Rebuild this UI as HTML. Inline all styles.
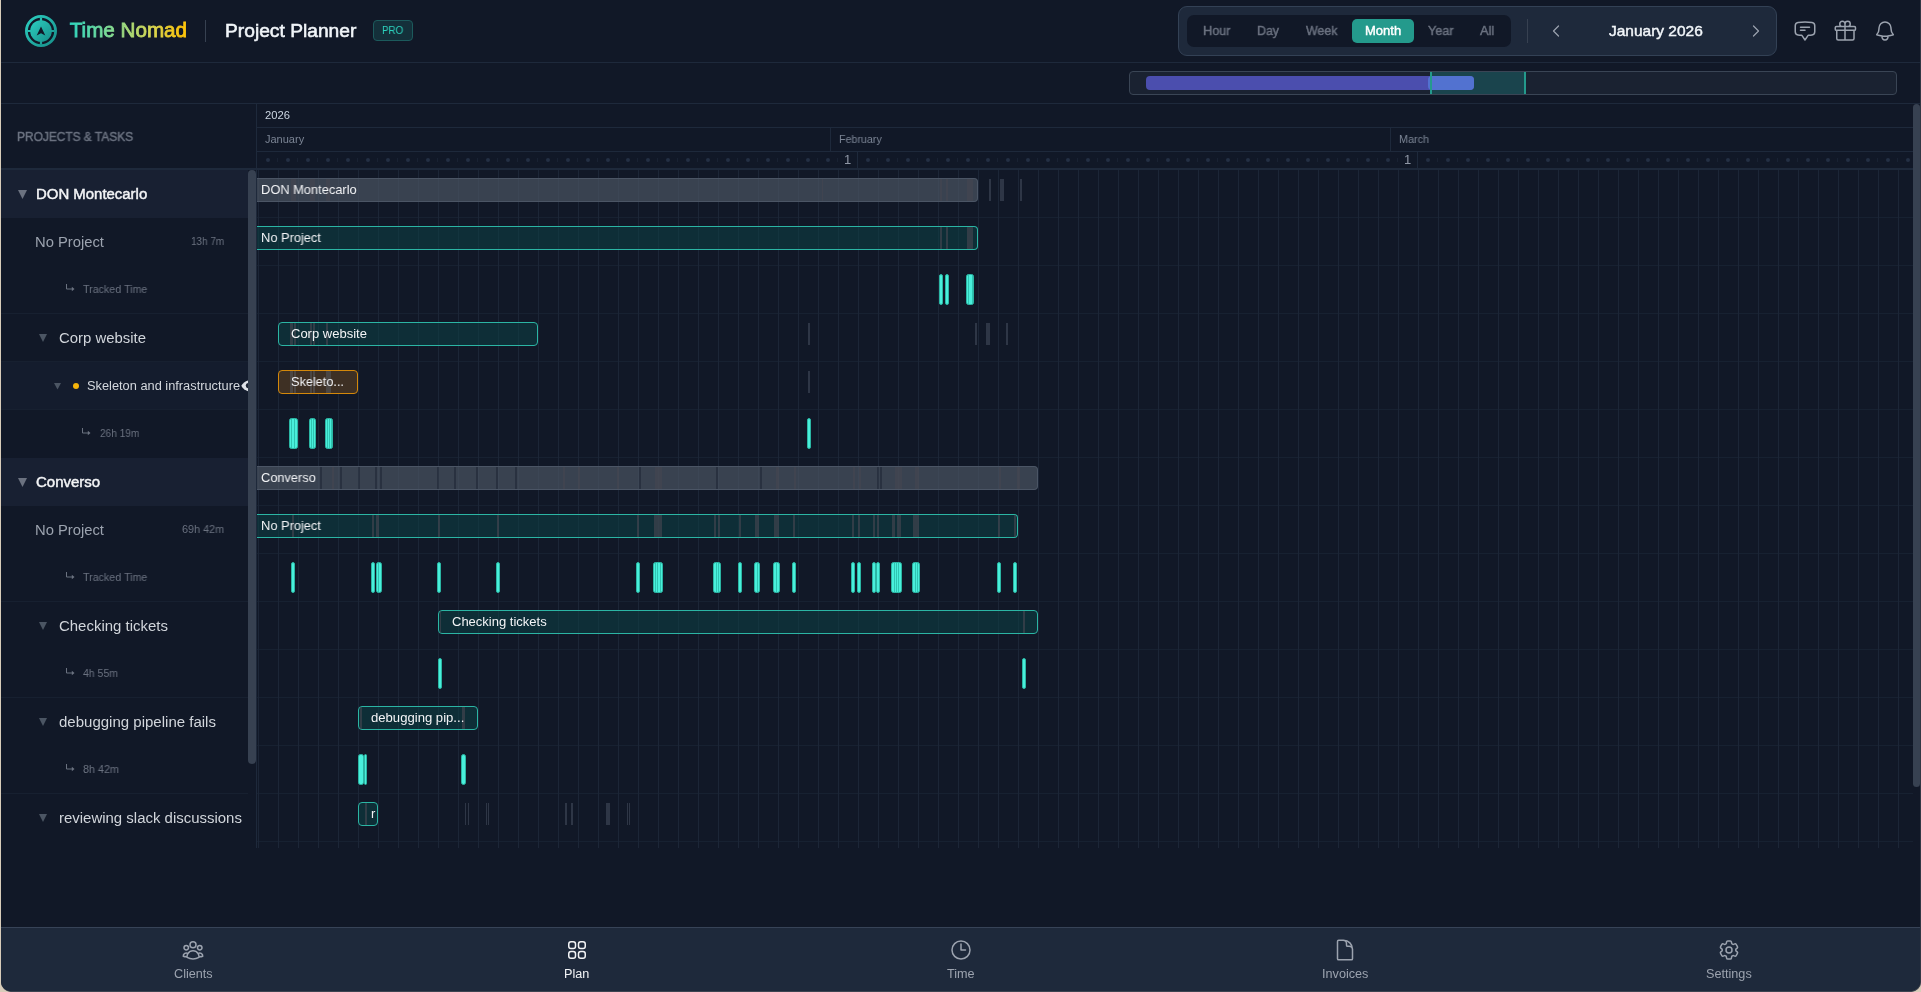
<!DOCTYPE html><html><head><meta charset="utf-8"><title>Time Nomad - Project Planner</title><style>
html,body{margin:0;padding:0}
body{width:1921px;height:992px;overflow:hidden;background:#d8ccba;font-family:"Liberation Sans",sans-serif;position:relative}
#win{position:absolute;left:1px;top:0;width:1919px;height:991px;background:#111827;border-radius:0 0 10px 10px;overflow:hidden;box-shadow:1px 0 0 0 #313845,0 1px 0 0 #3d4451,1px 1px 0 0 #3d4451}
#w{position:absolute;left:-1px;top:0;width:1921px;height:992px}
.t{position:absolute;white-space:nowrap;transform-origin:0 50%;display:block;will-change:transform}
.b{position:absolute;box-sizing:border-box}
svg{position:absolute;overflow:visible}
</style></head><body><div id="win"><div id="w">
<!-- header -->
<div class="b" style="left:0px;top:62px;width:1921px;height:1px;background:#1e293b"></div>
<div class="b" style="left:0px;top:103px;width:1921px;height:1px;background:#1e293b"></div>
<svg style="left:25px;top:15px" width="32" height="32" viewBox="0 0 32 32">
<defs><linearGradient id="lg" x1="0" y1="0" x2="1" y2="1"><stop offset="0" stop-color="#2ccfc0"/><stop offset="1" stop-color="#178f8a"/></linearGradient></defs>
<circle cx="16" cy="16" r="14.6" fill="none" stroke="url(#lg)" stroke-width="2.8"/>
<circle cx="16" cy="16" r="10.8" fill="url(#lg)"/>
<path d="M16 2.5v5.5M16 24v5.5M2.5 16h5.5M24 16h5.5" stroke="url(#lg)" stroke-width="2.2"/>
<path d="M16 11.4 20.3 20.4 16 18.3 11.7 20.4Z" fill="#111827"/>
</svg>
<svg style="left:66px;top:12px;will-change:transform" width="126" height="34" viewBox="66 12 126 34"><defs><linearGradient id="tg" gradientUnits="userSpaceOnUse" x1="69" y1="0" x2="187" y2="0"><stop offset="0" stop-color="#2dd4bf"/><stop offset="0.4" stop-color="#8ddb8c"/><stop offset="0.7" stop-color="#d6d552"/><stop offset="0.95" stop-color="#fcc40c"/></linearGradient></defs><text x="69.8" y="37" font-family="Liberation Sans, sans-serif" font-size="20" textLength="117.2" lengthAdjust="spacingAndGlyphs" fill="url(#tg)" stroke="url(#tg)" stroke-width="0.8">Time Nomad</text></svg>
<div class="b" style="left:205px;top:20px;width:1px;height:22px;background:#374151"></div>
<span class="t" style="left:225.00px;top:20px;font-size:18px;line-height:22px;-webkit-text-stroke:0.55px;color:#f1f5f9;transform:scaleX(1.0677);">Project Planner</span>
<div class="b" style="left:373px;top:20px;width:40px;height:21px;background:#14303a;border:1px solid #1c5a5c;border-radius:4px"></div>
<span class="t" style="left:381.70px;top:23px;font-size:11px;line-height:15px;color:#2dd4bf;transform:scaleX(0.8901);">PRO</span>
<div class="b" style="left:1178px;top:6px;width:599px;height:50px;background:#1e293b;border:1px solid #334155;border-radius:9px"></div>
<div class="b" style="left:1187px;top:15px;width:324px;height:32px;background:#111827;border-radius:7px"></div>
<div class="b" style="left:1352px;top:19px;width:62px;height:24px;background:#249a8c;border-radius:5px"></div>
<span class="t" style="left:1203.00px;top:22px;font-size:13px;line-height:17px;-webkit-text-stroke:0.45px;color:#6b7280;transform:scaleX(0.9782);">Hour</span>
<span class="t" style="left:1257.30px;top:22px;font-size:13px;line-height:17px;-webkit-text-stroke:0.45px;color:#6b7280;transform:scaleX(0.9524);">Day</span>
<span class="t" style="left:1306.30px;top:22px;font-size:13px;line-height:17px;-webkit-text-stroke:0.45px;color:#6b7280;transform:scaleX(0.9517);">Week</span>
<span class="t" style="left:1364.75px;top:22px;font-size:13px;line-height:17px;-webkit-text-stroke:0.45px;color:#ffffff;">Month</span>
<span class="t" style="left:1428.00px;top:22px;font-size:13px;line-height:17px;-webkit-text-stroke:0.45px;color:#6b7280;transform:scaleX(0.9720);">Year</span>
<span class="t" style="left:1480.00px;top:22px;font-size:13px;line-height:17px;-webkit-text-stroke:0.45px;color:#6b7280;transform:scaleX(0.9833);">All</span>
<div class="b" style="left:1527px;top:19px;width:1px;height:24px;background:#374151"></div>
<svg style="left:1548px;top:23px" width="16" height="16" viewBox="0 0 24 24" fill="none" stroke="#9ca3af" stroke-width="1.8" stroke-linecap="round" stroke-linejoin="round" ><path d="M15.75 19.5 8.25 12l7.5-7.5"/></svg>
<svg style="left:1748px;top:23px" width="16" height="16" viewBox="0 0 24 24" fill="none" stroke="#9ca3af" stroke-width="1.8" stroke-linecap="round" stroke-linejoin="round" ><path d="m8.25 4.5 7.5 7.5-7.5 7.5"/></svg>
<span class="t" style="left:1608.70px;top:21px;font-size:15px;line-height:19px;-webkit-text-stroke:0.45px;color:#f1f5f9;transform:scaleX(1.0320);">January 2026</span>
<svg style="left:1793px;top:19px" width="24" height="24" viewBox="0 0 24 24" fill="none" stroke="#9ca3af" stroke-width="1.5" stroke-linecap="round" stroke-linejoin="round" ><path d="M7.5 8.25h9m-9 3H12m-9.75 1.51c0 1.6 1.123 2.994 2.707 3.227 1.129.166 2.27.293 3.423.379.35.026.67.21.865.501L12 21l2.755-4.133a1.14 1.14 0 0 1 .865-.501 48.172 48.172 0 0 0 3.423-.379c1.584-.233 2.707-1.626 2.707-3.228V6.741c0-1.602-1.123-2.995-2.707-3.228A48.394 48.394 0 0 0 12 3c-2.392 0-4.744.175-7.043.513C3.373 3.746 2.25 5.14 2.25 6.741v6.018Z"/></svg>
<svg style="left:1833px;top:19px" width="24" height="24" viewBox="0 0 24 24" fill="none" stroke="#9ca3af" stroke-width="1.5" stroke-linecap="round" stroke-linejoin="round" ><path d="M21 11.25v8.25a1.5 1.5 0 0 1-1.5 1.5H5.25a1.5 1.5 0 0 1-1.5-1.5v-8.25M12 4.875A2.625 2.625 0 1 0 9.375 7.5H12m0-2.625V7.5m0-2.625A2.625 2.625 0 1 1 14.625 7.5H12m0 0V21m-8.625-9.75h18c.621 0 1.125-.504 1.125-1.125v-1.5c0-.621-.504-1.125-1.125-1.125h-18c-.621 0-1.125.504-1.125 1.125v1.5c0 .621.504 1.125 1.125 1.125Z"/></svg>
<svg style="left:1873px;top:19px" width="24" height="24" viewBox="0 0 24 24" fill="none" stroke="#9ca3af" stroke-width="1.5" stroke-linecap="round" stroke-linejoin="round" ><path d="M14.857 17.082a23.848 23.848 0 0 0 5.454-1.31A8.967 8.967 0 0 1 18 9.75V9A6 6 0 0 0 6 9v.75a8.967 8.967 0 0 1-2.312 6.022c1.733.64 3.56 1.085 5.455 1.31m5.714 0a24.255 24.255 0 0 1-5.714 0m5.714 0a3 3 0 1 1-5.714 0"/></svg>
<div class="b" style="left:1129px;top:71px;width:768px;height:24px;background:#1a2231;border:1px solid #3a4555;border-radius:4px"></div>
<div class="b" style="left:1430px;top:72px;width:96px;height:22px;background:#1a444d"></div>
<div class="b" style="left:1146px;top:76px;width:328px;height:14px;background:#4b4eae;border-radius:4px"></div>
<div class="b" style="left:1428px;top:76px;width:46px;height:14px;background:#5272d0;border-radius:4px"></div>
<div class="b" style="left:1430px;top:72px;width:2px;height:22px;background:#249a8c"></div>
<div class="b" style="left:1524px;top:72px;width:2px;height:22px;background:#249a8c"></div>
<!-- left panel -->
<span class="t" style="left:17.25px;top:129px;font-size:12px;line-height:16px;-webkit-text-stroke:0.45px;color:#6b7280;transform:scaleX(0.9925);">PROJECTS &amp; TASKS</span>
<div class="b" style="left:0px;top:168px;width:257px;height:2px;background:#1e293b"></div>
<div class="b" style="left:0px;top:170px;width:248px;height:48px;background:#182032"></div>
<div class="b" style="left:0px;top:458px;width:248px;height:48px;background:#182032"></div>
<div class="b" style="left:0px;top:362px;width:248px;height:48px;background:#141c2d"></div>
<div class="b" style="left:0px;top:313px;width:248px;height:1px;background:#172030"></div>
<div class="b" style="left:0px;top:361px;width:248px;height:1px;background:#172030"></div>
<div class="b" style="left:0px;top:409px;width:248px;height:1px;background:#172030"></div>
<div class="b" style="left:0px;top:601px;width:248px;height:1px;background:#172030"></div>
<div class="b" style="left:0px;top:697px;width:248px;height:1px;background:#172030"></div>
<div class="b" style="left:0px;top:793px;width:248px;height:1px;background:#172030"></div>
<svg style="left:18px;top:190px" width="9" height="9" viewBox="0 0 9 9"><path d="M0 0H9L4.5 9Z" fill="#6b7280"/></svg>
<span class="t" style="left:36.25px;top:185px;font-size:14px;line-height:18px;-webkit-text-stroke:0.45px;color:#f3f4f6;transform:scaleX(1.0668);">DON Montecarlo</span>
<span class="t" style="left:35.20px;top:233px;font-size:14px;line-height:18px;color:#9ca3af;transform:scaleX(1.0554);">No Project</span>
<span class="t" style="left:190.80px;top:234px;font-size:11px;line-height:15px;color:#6b7280;transform:scaleX(0.9034);">13h 7m</span>
<svg style="left:66px;top:284px" width="10" height="9" viewBox="0 0 10 9"><path d="M0.5 0V5H6" fill="none" stroke="#6b7280" stroke-width="1"/><path d="M5.8 2.8L8.5 5L5.8 7.2Z" fill="#6b7280"/></svg>
<span class="t" style="left:82.80px;top:282px;font-size:11px;line-height:15px;color:#6b7280;transform:scaleX(0.9721);">Tracked Time</span>
<svg style="left:39.2px;top:334.2px" width="8" height="8" viewBox="0 0 8 8"><path d="M0 0H8L4.0 8Z" fill="#4b5563"/></svg>
<span class="t" style="left:58.80px;top:329px;font-size:14px;line-height:18px;color:#d1d5db;transform:scaleX(1.0642);">Corp website</span>
<svg style="left:54px;top:383px" width="7" height="6.5" viewBox="0 0 7 6.5"><path d="M0 0H7L3.5 6.5Z" fill="#4b5563"/></svg>
<div class="b" style="left:72.8px;top:382.8px;width:6.4px;height:6.4px;background:#f5b40a;border-radius:50%"></div>
<span class="t" style="left:87.30px;top:378px;font-size:12px;line-height:16px;color:#d4d8de;transform:scaleX(1.0671);">Skeleton and infrastructure</span>
<svg style="left:241px;top:379px;overflow:hidden" width="7" height="14" viewBox="0 0 7 14"><path d="M0.3 6.8C2.6 2.6 6.5 0.9 12 0.9V12.9C6.5 12.9 2.6 11 0.3 6.8Z" fill="#dfe2e8"/><ellipse cx="7.4" cy="6.6" rx="2.6" ry="2.7" fill="#1c2434"/></svg>
<svg style="left:82px;top:428px" width="10" height="9" viewBox="0 0 10 9"><path d="M0.5 0V5H6" fill="none" stroke="#6b7280" stroke-width="1"/><path d="M5.8 2.8L8.5 5L5.8 7.2Z" fill="#6b7280"/></svg>
<span class="t" style="left:99.50px;top:426px;font-size:11px;line-height:15px;color:#6b7280;transform:scaleX(0.9170);">26h 19m</span>
<svg style="left:18px;top:478px" width="9" height="9" viewBox="0 0 9 9"><path d="M0 0H9L4.5 9Z" fill="#6b7280"/></svg>
<span class="t" style="left:36.25px;top:473px;font-size:14px;line-height:18px;-webkit-text-stroke:0.45px;color:#f3f4f6;transform:scaleX(1.0716);">Converso</span>
<span class="t" style="left:35.20px;top:521px;font-size:14px;line-height:18px;color:#9ca3af;transform:scaleX(1.0554);">No Project</span>
<span class="t" style="left:182.00px;top:522px;font-size:11px;line-height:15px;color:#6b7280;transform:scaleX(0.9825);">69h 42m</span>
<svg style="left:66px;top:572px" width="10" height="9" viewBox="0 0 10 9"><path d="M0.5 0V5H6" fill="none" stroke="#6b7280" stroke-width="1"/><path d="M5.8 2.8L8.5 5L5.8 7.2Z" fill="#6b7280"/></svg>
<span class="t" style="left:82.80px;top:570px;font-size:11px;line-height:15px;color:#6b7280;transform:scaleX(0.9721);">Tracked Time</span>
<svg style="left:39.2px;top:622.2px" width="8" height="8" viewBox="0 0 8 8"><path d="M0 0H8L4.0 8Z" fill="#4b5563"/></svg>
<span class="t" style="left:59.20px;top:617px;font-size:14px;line-height:18px;color:#d1d5db;transform:scaleX(1.0686);">Checking tickets</span>
<svg style="left:66px;top:668px" width="10" height="9" viewBox="0 0 10 9"><path d="M0.5 0V5H6" fill="none" stroke="#6b7280" stroke-width="1"/><path d="M5.8 2.8L8.5 5L5.8 7.2Z" fill="#6b7280"/></svg>
<span class="t" style="left:83.30px;top:666px;font-size:11px;line-height:15px;color:#6b7280;transform:scaleX(0.9524);">4h 55m</span>
<svg style="left:39.2px;top:718.2px" width="8" height="8" viewBox="0 0 8 8"><path d="M0 0H8L4.0 8Z" fill="#4b5563"/></svg>
<span class="t" style="left:59.20px;top:713px;font-size:14px;line-height:18px;color:#d1d5db;transform:scaleX(1.0726);">debugging pipeline fails</span>
<svg style="left:66px;top:764px" width="10" height="9" viewBox="0 0 10 9"><path d="M0.5 0V5H6" fill="none" stroke="#6b7280" stroke-width="1"/><path d="M5.8 2.8L8.5 5L5.8 7.2Z" fill="#6b7280"/></svg>
<span class="t" style="left:83.30px;top:762px;font-size:11px;line-height:15px;color:#6b7280;transform:scaleX(0.9796);">8h 42m</span>
<svg style="left:39.2px;top:814.2px" width="8" height="8" viewBox="0 0 8 8"><path d="M0 0H8L4.0 8Z" fill="#4b5563"/></svg>
<span class="t" style="left:59.20px;top:809px;font-size:14px;line-height:18px;color:#d1d5db;transform:scaleX(1.0686);">reviewing slack discussions</span>
<div class="b" style="left:248px;top:170px;width:8px;height:594px;background:#374151;border-radius:4px"></div>
<div class="b" style="left:256px;top:104px;width:1px;height:744px;background:#1e293b"></div>
<!-- gantt -->
<div class="b" style="left:257px;top:127px;width:1656px;height:1px;background:#1e293b"></div>
<div class="b" style="left:257px;top:151px;width:1656px;height:1px;background:#1e293b"></div>
<div class="b" style="left:257px;top:168px;width:1656px;height:2px;background:#1e293b"></div>
<span class="t" style="left:265.00px;top:108px;font-size:11px;line-height:15px;color:#cbd5e1;transform:scaleX(1.0204);">2026</span>
<span class="t" style="left:265.00px;top:132px;font-size:11px;line-height:15px;color:#7b8494;transform:scaleX(0.9904);">January</span>
<div class="b" style="left:830px;top:128px;width:1px;height:24px;background:#1e293b"></div>
<span class="t" style="left:839.25px;top:132px;font-size:11px;line-height:15px;color:#7b8494;transform:scaleX(0.9716);">February</span>
<div class="b" style="left:1390px;top:128px;width:1px;height:24px;background:#1e293b"></div>
<span class="t" style="left:1399.00px;top:132px;font-size:11px;line-height:15px;color:#7b8494;transform:scaleX(0.9796);">March</span>
<svg style="left:257px;top:152px" width="1656" height="16" viewBox="257 152 1656 16"><circle cx="268" cy="160" r="2" fill="#243044"/><circle cx="288" cy="160" r="2" fill="#243044"/><rect x="277" y="158" width="1" height="4" fill="#192233"/><circle cx="308" cy="160" r="2" fill="#243044"/><rect x="297" y="158" width="1" height="4" fill="#192233"/><circle cx="328" cy="160" r="2" fill="#243044"/><rect x="317" y="158" width="1" height="4" fill="#192233"/><circle cx="348" cy="160" r="2" fill="#243044"/><rect x="337" y="158" width="1" height="4" fill="#192233"/><circle cx="368" cy="160" r="2" fill="#243044"/><rect x="357" y="158" width="1" height="4" fill="#192233"/><circle cx="388" cy="160" r="2" fill="#243044"/><rect x="377" y="158" width="1" height="4" fill="#192233"/><circle cx="408" cy="160" r="2" fill="#243044"/><rect x="397" y="158" width="1" height="4" fill="#192233"/><circle cx="428" cy="160" r="2" fill="#243044"/><rect x="417" y="158" width="1" height="4" fill="#192233"/><circle cx="448" cy="160" r="2" fill="#243044"/><rect x="437" y="158" width="1" height="4" fill="#192233"/><circle cx="468" cy="160" r="2" fill="#243044"/><rect x="457" y="158" width="1" height="4" fill="#192233"/><circle cx="488" cy="160" r="2" fill="#243044"/><rect x="477" y="158" width="1" height="4" fill="#192233"/><circle cx="508" cy="160" r="2" fill="#243044"/><rect x="497" y="158" width="1" height="4" fill="#192233"/><circle cx="528" cy="160" r="2" fill="#243044"/><rect x="517" y="158" width="1" height="4" fill="#192233"/><circle cx="548" cy="160" r="2" fill="#243044"/><rect x="537" y="158" width="1" height="4" fill="#192233"/><circle cx="568" cy="160" r="2" fill="#243044"/><rect x="557" y="158" width="1" height="4" fill="#192233"/><circle cx="588" cy="160" r="2" fill="#243044"/><rect x="577" y="158" width="1" height="4" fill="#192233"/><circle cx="608" cy="160" r="2" fill="#243044"/><rect x="597" y="158" width="1" height="4" fill="#192233"/><circle cx="628" cy="160" r="2" fill="#243044"/><rect x="617" y="158" width="1" height="4" fill="#192233"/><circle cx="648" cy="160" r="2" fill="#243044"/><rect x="637" y="158" width="1" height="4" fill="#192233"/><circle cx="668" cy="160" r="2" fill="#243044"/><rect x="657" y="158" width="1" height="4" fill="#192233"/><circle cx="688" cy="160" r="2" fill="#243044"/><rect x="677" y="158" width="1" height="4" fill="#192233"/><circle cx="708" cy="160" r="2" fill="#243044"/><rect x="697" y="158" width="1" height="4" fill="#192233"/><circle cx="728" cy="160" r="2" fill="#243044"/><rect x="717" y="158" width="1" height="4" fill="#192233"/><circle cx="748" cy="160" r="2" fill="#243044"/><rect x="737" y="158" width="1" height="4" fill="#192233"/><circle cx="768" cy="160" r="2" fill="#243044"/><rect x="757" y="158" width="1" height="4" fill="#192233"/><circle cx="788" cy="160" r="2" fill="#243044"/><rect x="777" y="158" width="1" height="4" fill="#192233"/><circle cx="808" cy="160" r="2" fill="#243044"/><rect x="797" y="158" width="1" height="4" fill="#192233"/><circle cx="828" cy="160" r="2" fill="#243044"/><rect x="817" y="158" width="1" height="4" fill="#192233"/><rect x="857" y="152" width="1" height="16" fill="#1e293b"/><rect x="837" y="158" width="1" height="4" fill="#192233"/><circle cx="868" cy="160" r="2" fill="#243044"/><circle cx="888" cy="160" r="2" fill="#243044"/><rect x="877" y="158" width="1" height="4" fill="#192233"/><circle cx="908" cy="160" r="2" fill="#243044"/><rect x="897" y="158" width="1" height="4" fill="#192233"/><circle cx="928" cy="160" r="2" fill="#243044"/><rect x="917" y="158" width="1" height="4" fill="#192233"/><circle cx="948" cy="160" r="2" fill="#243044"/><rect x="937" y="158" width="1" height="4" fill="#192233"/><circle cx="968" cy="160" r="2" fill="#243044"/><rect x="957" y="158" width="1" height="4" fill="#192233"/><circle cx="988" cy="160" r="2" fill="#243044"/><rect x="977" y="158" width="1" height="4" fill="#192233"/><circle cx="1008" cy="160" r="2" fill="#243044"/><rect x="997" y="158" width="1" height="4" fill="#192233"/><circle cx="1028" cy="160" r="2" fill="#243044"/><rect x="1017" y="158" width="1" height="4" fill="#192233"/><circle cx="1048" cy="160" r="2" fill="#243044"/><rect x="1037" y="158" width="1" height="4" fill="#192233"/><circle cx="1068" cy="160" r="2" fill="#243044"/><rect x="1057" y="158" width="1" height="4" fill="#192233"/><circle cx="1088" cy="160" r="2" fill="#243044"/><rect x="1077" y="158" width="1" height="4" fill="#192233"/><circle cx="1108" cy="160" r="2" fill="#243044"/><rect x="1097" y="158" width="1" height="4" fill="#192233"/><circle cx="1128" cy="160" r="2" fill="#243044"/><rect x="1117" y="158" width="1" height="4" fill="#192233"/><circle cx="1148" cy="160" r="2" fill="#243044"/><rect x="1137" y="158" width="1" height="4" fill="#192233"/><circle cx="1168" cy="160" r="2" fill="#243044"/><rect x="1157" y="158" width="1" height="4" fill="#192233"/><circle cx="1188" cy="160" r="2" fill="#243044"/><rect x="1177" y="158" width="1" height="4" fill="#192233"/><circle cx="1208" cy="160" r="2" fill="#243044"/><rect x="1197" y="158" width="1" height="4" fill="#192233"/><circle cx="1228" cy="160" r="2" fill="#243044"/><rect x="1217" y="158" width="1" height="4" fill="#192233"/><circle cx="1248" cy="160" r="2" fill="#243044"/><rect x="1237" y="158" width="1" height="4" fill="#192233"/><circle cx="1268" cy="160" r="2" fill="#243044"/><rect x="1257" y="158" width="1" height="4" fill="#192233"/><circle cx="1288" cy="160" r="2" fill="#243044"/><rect x="1277" y="158" width="1" height="4" fill="#192233"/><circle cx="1308" cy="160" r="2" fill="#243044"/><rect x="1297" y="158" width="1" height="4" fill="#192233"/><circle cx="1328" cy="160" r="2" fill="#243044"/><rect x="1317" y="158" width="1" height="4" fill="#192233"/><circle cx="1348" cy="160" r="2" fill="#243044"/><rect x="1337" y="158" width="1" height="4" fill="#192233"/><circle cx="1368" cy="160" r="2" fill="#243044"/><rect x="1357" y="158" width="1" height="4" fill="#192233"/><circle cx="1388" cy="160" r="2" fill="#243044"/><rect x="1377" y="158" width="1" height="4" fill="#192233"/><rect x="1417" y="152" width="1" height="16" fill="#1e293b"/><rect x="1397" y="158" width="1" height="4" fill="#192233"/><circle cx="1428" cy="160" r="2" fill="#243044"/><circle cx="1448" cy="160" r="2" fill="#243044"/><rect x="1437" y="158" width="1" height="4" fill="#192233"/><circle cx="1468" cy="160" r="2" fill="#243044"/><rect x="1457" y="158" width="1" height="4" fill="#192233"/><circle cx="1488" cy="160" r="2" fill="#243044"/><rect x="1477" y="158" width="1" height="4" fill="#192233"/><circle cx="1508" cy="160" r="2" fill="#243044"/><rect x="1497" y="158" width="1" height="4" fill="#192233"/><circle cx="1528" cy="160" r="2" fill="#243044"/><rect x="1517" y="158" width="1" height="4" fill="#192233"/><circle cx="1548" cy="160" r="2" fill="#243044"/><rect x="1537" y="158" width="1" height="4" fill="#192233"/><circle cx="1568" cy="160" r="2" fill="#243044"/><rect x="1557" y="158" width="1" height="4" fill="#192233"/><circle cx="1588" cy="160" r="2" fill="#243044"/><rect x="1577" y="158" width="1" height="4" fill="#192233"/><circle cx="1608" cy="160" r="2" fill="#243044"/><rect x="1597" y="158" width="1" height="4" fill="#192233"/><circle cx="1628" cy="160" r="2" fill="#243044"/><rect x="1617" y="158" width="1" height="4" fill="#192233"/><circle cx="1648" cy="160" r="2" fill="#243044"/><rect x="1637" y="158" width="1" height="4" fill="#192233"/><circle cx="1668" cy="160" r="2" fill="#243044"/><rect x="1657" y="158" width="1" height="4" fill="#192233"/><circle cx="1688" cy="160" r="2" fill="#243044"/><rect x="1677" y="158" width="1" height="4" fill="#192233"/><circle cx="1708" cy="160" r="2" fill="#243044"/><rect x="1697" y="158" width="1" height="4" fill="#192233"/><circle cx="1728" cy="160" r="2" fill="#243044"/><rect x="1717" y="158" width="1" height="4" fill="#192233"/><circle cx="1748" cy="160" r="2" fill="#243044"/><rect x="1737" y="158" width="1" height="4" fill="#192233"/><circle cx="1768" cy="160" r="2" fill="#243044"/><rect x="1757" y="158" width="1" height="4" fill="#192233"/><circle cx="1788" cy="160" r="2" fill="#243044"/><rect x="1777" y="158" width="1" height="4" fill="#192233"/><circle cx="1808" cy="160" r="2" fill="#243044"/><rect x="1797" y="158" width="1" height="4" fill="#192233"/><circle cx="1828" cy="160" r="2" fill="#243044"/><rect x="1817" y="158" width="1" height="4" fill="#192233"/><circle cx="1848" cy="160" r="2" fill="#243044"/><rect x="1837" y="158" width="1" height="4" fill="#192233"/><circle cx="1868" cy="160" r="2" fill="#243044"/><rect x="1857" y="158" width="1" height="4" fill="#192233"/><circle cx="1888" cy="160" r="2" fill="#243044"/><rect x="1877" y="158" width="1" height="4" fill="#192233"/><circle cx="1908" cy="160" r="2" fill="#243044"/><rect x="1897" y="158" width="1" height="4" fill="#192233"/></svg>
<span class="t" style="left:843.77px;top:151px;font-size:13px;line-height:17px;color:#8f97a5;">1</span>
<span class="t" style="left:1403.78px;top:151px;font-size:13px;line-height:17px;color:#8f97a5;">1</span>
<svg style="left:257px;top:170px" width="1656" height="678" viewBox="257 170 1656 678" shape-rendering="crispEdges"><rect x="257" y="217" width="1656" height="1" fill="#172131"/><rect x="257" y="265" width="1656" height="1" fill="#172131"/><rect x="257" y="313" width="1656" height="1" fill="#172131"/><rect x="257" y="361" width="1656" height="1" fill="#172131"/><rect x="257" y="409" width="1656" height="1" fill="#172131"/><rect x="257" y="457" width="1656" height="1" fill="#172131"/><rect x="257" y="505" width="1656" height="1" fill="#172131"/><rect x="257" y="553" width="1656" height="1" fill="#172131"/><rect x="257" y="601" width="1656" height="1" fill="#172131"/><rect x="257" y="649" width="1656" height="1" fill="#172131"/><rect x="257" y="697" width="1656" height="1" fill="#172131"/><rect x="257" y="745" width="1656" height="1" fill="#172131"/><rect x="257" y="793" width="1656" height="1" fill="#172131"/><rect x="257" y="841" width="1656" height="1" fill="#172131"/><rect x="258" y="170" width="1" height="678" fill="#1c2637"/><rect x="278" y="170" width="1" height="678" fill="#1c2637"/><rect x="298" y="170" width="1" height="678" fill="#1c2637"/><rect x="318" y="170" width="1" height="678" fill="#1c2637"/><rect x="338" y="170" width="1" height="678" fill="#1c2637"/><rect x="358" y="170" width="1" height="678" fill="#1c2637"/><rect x="378" y="170" width="1" height="678" fill="#1c2637"/><rect x="398" y="170" width="1" height="678" fill="#1c2637"/><rect x="418" y="170" width="1" height="678" fill="#1c2637"/><rect x="438" y="170" width="1" height="678" fill="#1c2637"/><rect x="458" y="170" width="1" height="678" fill="#1c2637"/><rect x="478" y="170" width="1" height="678" fill="#1c2637"/><rect x="498" y="170" width="1" height="678" fill="#1c2637"/><rect x="518" y="170" width="1" height="678" fill="#1c2637"/><rect x="538" y="170" width="1" height="678" fill="#1c2637"/><rect x="558" y="170" width="1" height="678" fill="#1c2637"/><rect x="578" y="170" width="1" height="678" fill="#1c2637"/><rect x="598" y="170" width="1" height="678" fill="#1c2637"/><rect x="618" y="170" width="1" height="678" fill="#1c2637"/><rect x="638" y="170" width="1" height="678" fill="#1c2637"/><rect x="658" y="170" width="1" height="678" fill="#1c2637"/><rect x="678" y="170" width="1" height="678" fill="#1c2637"/><rect x="698" y="170" width="1" height="678" fill="#1c2637"/><rect x="718" y="170" width="1" height="678" fill="#1c2637"/><rect x="738" y="170" width="1" height="678" fill="#1c2637"/><rect x="758" y="170" width="1" height="678" fill="#1c2637"/><rect x="778" y="170" width="1" height="678" fill="#1c2637"/><rect x="798" y="170" width="1" height="678" fill="#1c2637"/><rect x="818" y="170" width="1" height="678" fill="#1c2637"/><rect x="838" y="170" width="1" height="678" fill="#1c2637"/><rect x="858" y="170" width="1" height="678" fill="#1c2637"/><rect x="878" y="170" width="1" height="678" fill="#1c2637"/><rect x="898" y="170" width="1" height="678" fill="#1c2637"/><rect x="918" y="170" width="1" height="678" fill="#1c2637"/><rect x="938" y="170" width="1" height="678" fill="#1c2637"/><rect x="958" y="170" width="1" height="678" fill="#1c2637"/><rect x="978" y="170" width="1" height="678" fill="#1c2637"/><rect x="998" y="170" width="1" height="678" fill="#1c2637"/><rect x="1018" y="170" width="1" height="678" fill="#1c2637"/><rect x="1038" y="170" width="1" height="678" fill="#1c2637"/><rect x="1058" y="170" width="1" height="678" fill="#1c2637"/><rect x="1078" y="170" width="1" height="678" fill="#1c2637"/><rect x="1098" y="170" width="1" height="678" fill="#1c2637"/><rect x="1118" y="170" width="1" height="678" fill="#1c2637"/><rect x="1138" y="170" width="1" height="678" fill="#1c2637"/><rect x="1158" y="170" width="1" height="678" fill="#1c2637"/><rect x="1178" y="170" width="1" height="678" fill="#1c2637"/><rect x="1198" y="170" width="1" height="678" fill="#1c2637"/><rect x="1218" y="170" width="1" height="678" fill="#1c2637"/><rect x="1238" y="170" width="1" height="678" fill="#1c2637"/><rect x="1258" y="170" width="1" height="678" fill="#1c2637"/><rect x="1278" y="170" width="1" height="678" fill="#1c2637"/><rect x="1298" y="170" width="1" height="678" fill="#1c2637"/><rect x="1318" y="170" width="1" height="678" fill="#1c2637"/><rect x="1338" y="170" width="1" height="678" fill="#1c2637"/><rect x="1358" y="170" width="1" height="678" fill="#1c2637"/><rect x="1378" y="170" width="1" height="678" fill="#1c2637"/><rect x="1398" y="170" width="1" height="678" fill="#1c2637"/><rect x="1418" y="170" width="1" height="678" fill="#1c2637"/><rect x="1438" y="170" width="1" height="678" fill="#1c2637"/><rect x="1458" y="170" width="1" height="678" fill="#1c2637"/><rect x="1478" y="170" width="1" height="678" fill="#1c2637"/><rect x="1498" y="170" width="1" height="678" fill="#1c2637"/><rect x="1518" y="170" width="1" height="678" fill="#1c2637"/><rect x="1538" y="170" width="1" height="678" fill="#1c2637"/><rect x="1558" y="170" width="1" height="678" fill="#1c2637"/><rect x="1578" y="170" width="1" height="678" fill="#1c2637"/><rect x="1598" y="170" width="1" height="678" fill="#1c2637"/><rect x="1618" y="170" width="1" height="678" fill="#1c2637"/><rect x="1638" y="170" width="1" height="678" fill="#1c2637"/><rect x="1658" y="170" width="1" height="678" fill="#1c2637"/><rect x="1678" y="170" width="1" height="678" fill="#1c2637"/><rect x="1698" y="170" width="1" height="678" fill="#1c2637"/><rect x="1718" y="170" width="1" height="678" fill="#1c2637"/><rect x="1738" y="170" width="1" height="678" fill="#1c2637"/><rect x="1758" y="170" width="1" height="678" fill="#1c2637"/><rect x="1778" y="170" width="1" height="678" fill="#1c2637"/><rect x="1798" y="170" width="1" height="678" fill="#1c2637"/><rect x="1818" y="170" width="1" height="678" fill="#1c2637"/><rect x="1838" y="170" width="1" height="678" fill="#1c2637"/><rect x="1858" y="170" width="1" height="678" fill="#1c2637"/><rect x="1878" y="170" width="1" height="678" fill="#1c2637"/><rect x="1898" y="170" width="1" height="678" fill="#1c2637"/></svg>
<div class="b" style="left:257px;top:178px;width:721px;height:24px;overflow:hidden;background:rgba(74,84,99,0.7);border:1px solid #4b5565;border-left:none;border-radius:0 4px 4px 0;"><div class="b" style="left:34px;top:0;width:5px;height:22px;background:rgba(68,70,80,0.66)"></div><div class="b" style="left:53px;top:0;width:5px;height:22px;background:rgba(68,70,80,0.66)"></div><div class="b" style="left:69px;top:0;width:4px;height:22px;background:rgba(68,70,80,0.66)"></div><div class="b" style="left:565px;top:0;width:1px;height:22px;background:rgba(68,70,80,0.66)"></div><div class="b" style="left:683px;top:0;width:2px;height:22px;background:rgba(68,70,80,0.66)"></div><div class="b" style="left:689px;top:0;width:2px;height:22px;background:rgba(68,70,80,0.66)"></div><div class="b" style="left:710px;top:0;width:6px;height:22px;background:rgba(68,70,80,0.66)"></div></div><span class="t" style="left:261.25px;top:181px;font-size:13px;line-height:17px;color:#f3f4f6;transform:scaleX(0.9884);">DON Montecarlo</span>
<div class="b" style="left:989px;top:179px;width:2px;height:22px;background:rgba(94,104,120,0.38)"></div>
<div class="b" style="left:1000px;top:179px;width:4px;height:22px;background:rgba(94,104,120,0.38)"></div>
<div class="b" style="left:1020px;top:179px;width:2px;height:22px;background:rgba(94,104,120,0.38)"></div>
<div class="b" style="left:257px;top:226px;width:721px;height:24px;overflow:hidden;background:rgba(14,61,66,0.6);border:1px solid #2bb5a4;border-left:none;border-radius:0 4px 4px 0;"><div class="b" style="left:683px;top:0;width:2px;height:22px;background:rgba(68,70,80,0.66)"></div><div class="b" style="left:689px;top:0;width:2px;height:22px;background:rgba(68,70,80,0.66)"></div><div class="b" style="left:710px;top:0;width:6px;height:22px;background:rgba(68,70,80,0.66)"></div></div><span class="t" style="left:261.25px;top:229px;font-size:13px;line-height:17px;color:#f3f4f6;transform:scaleX(0.9877);">No Project</span>
<div class="b" style="left:939px;top:274px;width:4px;height:31px;background:#49efdb;border:1px solid #2bb6a4;border-radius:2.5px"></div>
<div class="b" style="left:945px;top:274px;width:4px;height:31px;background:#49efdb;border:1px solid #2bb6a4;border-radius:2.5px"></div>
<div class="b" style="left:966px;top:274px;width:8px;height:31px;background:#49efdb;border:1px solid #2bb6a4;border-radius:2.5px"></div><div class="b" style="left:968px;top:275px;width:1px;height:29px;background:#2fc4b1"></div><div class="b" style="left:972px;top:275px;width:1px;height:29px;background:#2fc4b1"></div>
<div class="b" style="left:278px;top:322px;width:260px;height:24px;overflow:hidden;background:rgba(14,61,66,0.6);border:1px solid #2bb5a4;border-radius:4px;"><div class="b" style="left:11px;top:0;width:3px;height:22px;background:rgba(68,70,80,0.66)"></div><div class="b" style="left:15px;top:0;width:2px;height:22px;background:rgba(68,70,80,0.66)"></div><div class="b" style="left:31px;top:0;width:2px;height:22px;background:rgba(68,70,80,0.66)"></div><div class="b" style="left:34px;top:0;width:2px;height:22px;background:rgba(68,70,80,0.66)"></div><div class="b" style="left:47px;top:0;width:2px;height:22px;background:rgba(68,70,80,0.66)"></div></div><span class="t" style="left:291.25px;top:325px;font-size:13px;line-height:17px;color:#f3f4f6;transform:scaleX(0.9951);">Corp website</span>
<div class="b" style="left:808px;top:323px;width:2px;height:22px;background:rgba(94,104,120,0.38)"></div>
<div class="b" style="left:975px;top:323px;width:2px;height:22px;background:rgba(94,104,120,0.38)"></div>
<div class="b" style="left:986px;top:323px;width:4px;height:22px;background:rgba(94,104,120,0.38)"></div>
<div class="b" style="left:1006px;top:323px;width:2px;height:22px;background:rgba(94,104,120,0.38)"></div>
<div class="b" style="left:278px;top:370px;width:80px;height:24px;overflow:hidden;background:#3e3024;border:1px solid #d4880a;border-radius:4px;"><div class="b" style="left:11px;top:0;width:3px;height:22px;background:rgba(80,78,78,0.75)"></div><div class="b" style="left:15px;top:0;width:2px;height:22px;background:rgba(80,78,78,0.75)"></div><div class="b" style="left:31px;top:0;width:2px;height:22px;background:rgba(80,78,78,0.75)"></div><div class="b" style="left:34px;top:0;width:2px;height:22px;background:rgba(80,78,78,0.75)"></div><div class="b" style="left:47px;top:0;width:5px;height:22px;background:rgba(80,78,78,0.75)"></div></div><span class="t" style="left:291.25px;top:373px;font-size:13px;line-height:17px;color:#f3f4f6;transform:scaleX(0.9770);">Skeleto...</span>
<div class="b" style="left:808px;top:371px;width:2px;height:22px;background:rgba(94,104,120,0.38)"></div>
<div class="b" style="left:289px;top:418px;width:9px;height:31px;background:#49efdb;border:1px solid #2bb6a4;border-radius:2.5px"></div><div class="b" style="left:291px;top:419px;width:1px;height:29px;background:#2fc4b1"></div><div class="b" style="left:294px;top:419px;width:1px;height:29px;background:#2fc4b1"></div>
<div class="b" style="left:309px;top:418px;width:7px;height:31px;background:#49efdb;border:1px solid #2bb6a4;border-radius:2.5px"></div><div class="b" style="left:311px;top:419px;width:1px;height:29px;background:#2fc4b1"></div><div class="b" style="left:313px;top:419px;width:1px;height:29px;background:#2fc4b1"></div>
<div class="b" style="left:325px;top:418px;width:8px;height:31px;background:#49efdb;border:1px solid #2bb6a4;border-radius:2.5px"></div><div class="b" style="left:327px;top:419px;width:1px;height:29px;background:#2fc4b1"></div><div class="b" style="left:329px;top:419px;width:1px;height:29px;background:#2fc4b1"></div><div class="b" style="left:331px;top:419px;width:1px;height:29px;background:#2fc4b1"></div>
<div class="b" style="left:807px;top:418px;width:4px;height:31px;background:#49efdb;border:1px solid #2bb6a4;border-radius:2.5px"></div>
<div class="b" style="left:257px;top:466px;width:781px;height:24px;overflow:hidden;background:rgba(74,84,99,0.7);border:1px solid #4b5565;border-left:none;border-radius:0 4px 4px 0;"><div class="b" style="left:75px;top:0;width:2px;height:22px;background:rgba(68,70,80,0.66)"></div><div class="b" style="left:519px;top:0;width:3px;height:22px;background:rgba(68,70,80,0.66)"></div><div class="b" style="left:537px;top:0;width:2px;height:22px;background:rgba(68,70,80,0.66)"></div><div class="b" style="left:596px;top:0;width:2px;height:22px;background:rgba(68,70,80,0.66)"></div><div class="b" style="left:602px;top:0;width:2px;height:22px;background:rgba(68,70,80,0.66)"></div><div class="b" style="left:638px;top:0;width:7px;height:22px;background:rgba(68,70,80,0.66)"></div><div class="b" style="left:658px;top:0;width:4px;height:22px;background:rgba(68,70,80,0.66)"></div><div class="b" style="left:742px;top:0;width:2px;height:22px;background:rgba(68,70,80,0.66)"></div><div class="b" style="left:760px;top:0;width:3px;height:22px;background:rgba(68,70,80,0.66)"></div><div class="b" style="left:306px;top:0;width:2px;height:22px;background:rgba(68,70,80,0.66)"></div><div class="b" style="left:321px;top:0;width:2px;height:22px;background:rgba(68,70,80,0.66)"></div><div class="b" style="left:360px;top:0;width:2px;height:22px;background:rgba(68,70,80,0.66)"></div><div class="b" style="left:398px;top:0;width:7px;height:22px;background:rgba(68,70,80,0.66)"></div><div class="b" style="left:63px;top:0;width:2px;height:22px;background:rgba(17,24,39,0.4)"></div><div class="b" style="left:83px;top:0;width:2px;height:22px;background:rgba(17,24,39,0.4)"></div><div class="b" style="left:101px;top:0;width:2px;height:22px;background:rgba(17,24,39,0.4)"></div><div class="b" style="left:118px;top:0;width:2px;height:22px;background:rgba(17,24,39,0.4)"></div><div class="b" style="left:123px;top:0;width:2px;height:22px;background:rgba(17,24,39,0.4)"></div><div class="b" style="left:180px;top:0;width:2px;height:22px;background:rgba(17,24,39,0.4)"></div><div class="b" style="left:197px;top:0;width:2px;height:22px;background:rgba(17,24,39,0.4)"></div><div class="b" style="left:219px;top:0;width:2px;height:22px;background:rgba(17,24,39,0.4)"></div><div class="b" style="left:239px;top:0;width:2px;height:22px;background:rgba(17,24,39,0.4)"></div><div class="b" style="left:258px;top:0;width:2px;height:22px;background:rgba(17,24,39,0.4)"></div><div class="b" style="left:382px;top:0;width:2px;height:22px;background:rgba(17,24,39,0.4)"></div><div class="b" style="left:459px;top:0;width:2px;height:22px;background:rgba(17,24,39,0.4)"></div><div class="b" style="left:503px;top:0;width:2px;height:22px;background:rgba(17,24,39,0.4)"></div><div class="b" style="left:620px;top:0;width:2px;height:22px;background:rgba(17,24,39,0.4)"></div><div class="b" style="left:623px;top:0;width:2px;height:22px;background:rgba(17,24,39,0.4)"></div></div><span class="t" style="left:261.00px;top:469px;font-size:13px;line-height:17px;color:#f3f4f6;transform:scaleX(0.9843);">Converso</span>
<div class="b" style="left:257px;top:514px;width:761px;height:24px;overflow:hidden;background:rgba(14,61,66,0.6);border:1px solid #2bb5a4;border-left:none;border-radius:0 4px 4px 0;"><div class="b" style="left:35px;top:0;width:2px;height:22px;background:rgba(68,70,80,0.66)"></div><div class="b" style="left:115px;top:0;width:2px;height:22px;background:rgba(68,70,80,0.66)"></div><div class="b" style="left:119px;top:0;width:3px;height:22px;background:rgba(68,70,80,0.66)"></div><div class="b" style="left:181px;top:0;width:2px;height:22px;background:rgba(68,70,80,0.66)"></div><div class="b" style="left:240px;top:0;width:2px;height:22px;background:rgba(68,70,80,0.66)"></div><div class="b" style="left:380px;top:0;width:2px;height:22px;background:rgba(68,70,80,0.66)"></div><div class="b" style="left:397px;top:0;width:8px;height:22px;background:rgba(68,70,80,0.66)"></div><div class="b" style="left:457px;top:0;width:2px;height:22px;background:rgba(68,70,80,0.66)"></div><div class="b" style="left:461px;top:0;width:2px;height:22px;background:rgba(68,70,80,0.66)"></div><div class="b" style="left:482px;top:0;width:2px;height:22px;background:rgba(68,70,80,0.66)"></div><div class="b" style="left:498px;top:0;width:4px;height:22px;background:rgba(68,70,80,0.66)"></div><div class="b" style="left:517px;top:0;width:5px;height:22px;background:rgba(68,70,80,0.66)"></div><div class="b" style="left:536px;top:0;width:2px;height:22px;background:rgba(68,70,80,0.66)"></div><div class="b" style="left:595px;top:0;width:2px;height:22px;background:rgba(68,70,80,0.66)"></div><div class="b" style="left:601px;top:0;width:2px;height:22px;background:rgba(68,70,80,0.66)"></div><div class="b" style="left:616px;top:0;width:2px;height:22px;background:rgba(68,70,80,0.66)"></div><div class="b" style="left:620px;top:0;width:2px;height:22px;background:rgba(68,70,80,0.66)"></div><div class="b" style="left:635px;top:0;width:3px;height:22px;background:rgba(68,70,80,0.66)"></div><div class="b" style="left:640px;top:0;width:4px;height:22px;background:rgba(68,70,80,0.66)"></div><div class="b" style="left:656px;top:0;width:6px;height:22px;background:rgba(68,70,80,0.66)"></div><div class="b" style="left:741px;top:0;width:2px;height:22px;background:rgba(68,70,80,0.66)"></div><div class="b" style="left:757px;top:0;width:2px;height:22px;background:rgba(68,70,80,0.66)"></div></div><span class="t" style="left:261.25px;top:517px;font-size:13px;line-height:17px;color:#f3f4f6;transform:scaleX(0.9877);">No Project</span>
<div class="b" style="left:291px;top:562px;width:4px;height:31px;background:#49efdb;border:1px solid #2bb6a4;border-radius:2.5px"></div>
<div class="b" style="left:371px;top:562px;width:4px;height:31px;background:#49efdb;border:1px solid #2bb6a4;border-radius:2.5px"></div>
<div class="b" style="left:376px;top:562px;width:6px;height:31px;background:#49efdb;border:1px solid #2bb6a4;border-radius:2.5px"></div><div class="b" style="left:378px;top:563px;width:1px;height:29px;background:#2fc4b1"></div>
<div class="b" style="left:437px;top:562px;width:4px;height:31px;background:#49efdb;border:1px solid #2bb6a4;border-radius:2.5px"></div>
<div class="b" style="left:496px;top:562px;width:4px;height:31px;background:#49efdb;border:1px solid #2bb6a4;border-radius:2.5px"></div>
<div class="b" style="left:636px;top:562px;width:4px;height:31px;background:#49efdb;border:1px solid #2bb6a4;border-radius:2.5px"></div>
<div class="b" style="left:653px;top:562px;width:10px;height:31px;background:#49efdb;border:1px solid #2bb6a4;border-radius:2.5px"></div><div class="b" style="left:655px;top:563px;width:1px;height:29px;background:#2fc4b1"></div><div class="b" style="left:657px;top:563px;width:1px;height:29px;background:#2fc4b1"></div><div class="b" style="left:660px;top:563px;width:1px;height:29px;background:#2fc4b1"></div>
<div class="b" style="left:713px;top:562px;width:8px;height:31px;background:#49efdb;border:1px solid #2bb6a4;border-radius:2.5px"></div><div class="b" style="left:716px;top:563px;width:1px;height:29px;background:#2fc4b1"></div><div class="b" style="left:718px;top:563px;width:1px;height:29px;background:#2fc4b1"></div>
<div class="b" style="left:738px;top:562px;width:4px;height:31px;background:#49efdb;border:1px solid #2bb6a4;border-radius:2.5px"></div>
<div class="b" style="left:754px;top:562px;width:6px;height:31px;background:#49efdb;border:1px solid #2bb6a4;border-radius:2.5px"></div><div class="b" style="left:757px;top:563px;width:1px;height:29px;background:#2fc4b1"></div>
<div class="b" style="left:773px;top:562px;width:7px;height:31px;background:#49efdb;border:1px solid #2bb6a4;border-radius:2.5px"></div><div class="b" style="left:776px;top:563px;width:1px;height:29px;background:#2fc4b1"></div>
<div class="b" style="left:792px;top:562px;width:4px;height:31px;background:#49efdb;border:1px solid #2bb6a4;border-radius:2.5px"></div>
<div class="b" style="left:851px;top:562px;width:4px;height:31px;background:#49efdb;border:1px solid #2bb6a4;border-radius:2.5px"></div>
<div class="b" style="left:857px;top:562px;width:4px;height:31px;background:#49efdb;border:1px solid #2bb6a4;border-radius:2.5px"></div>
<div class="b" style="left:872px;top:562px;width:4px;height:31px;background:#49efdb;border:1px solid #2bb6a4;border-radius:2.5px"></div>
<div class="b" style="left:876px;top:562px;width:4px;height:31px;background:#49efdb;border:1px solid #2bb6a4;border-radius:2.5px"></div>
<div class="b" style="left:891px;top:562px;width:11px;height:31px;background:#49efdb;border:1px solid #2bb6a4;border-radius:2.5px"></div><div class="b" style="left:894px;top:563px;width:1px;height:29px;background:#2fc4b1"></div><div class="b" style="left:896px;top:563px;width:1px;height:29px;background:#2fc4b1"></div><div class="b" style="left:898px;top:563px;width:1px;height:29px;background:#2fc4b1"></div>
<div class="b" style="left:912px;top:562px;width:8px;height:31px;background:#49efdb;border:1px solid #2bb6a4;border-radius:2.5px"></div><div class="b" style="left:915px;top:563px;width:1px;height:29px;background:#2fc4b1"></div><div class="b" style="left:917px;top:563px;width:1px;height:29px;background:#2fc4b1"></div>
<div class="b" style="left:997px;top:562px;width:4px;height:31px;background:#49efdb;border:1px solid #2bb6a4;border-radius:2.5px"></div>
<div class="b" style="left:1013px;top:562px;width:4px;height:31px;background:#49efdb;border:1px solid #2bb6a4;border-radius:2.5px"></div>
<div class="b" style="left:438px;top:610px;width:600px;height:24px;overflow:hidden;background:rgba(14,61,66,0.6);border:1px solid #2bb5a4;border-radius:4px;"><div class="b" style="left:1px;top:0;width:1px;height:22px;background:rgba(68,70,80,0.66)"></div><div class="b" style="left:584px;top:0;width:2px;height:22px;background:rgba(68,70,80,0.66)"></div></div><span class="t" style="left:451.75px;top:613px;font-size:13px;line-height:17px;color:#f3f4f6;">Checking tickets</span>
<div class="b" style="left:438px;top:658px;width:4px;height:31px;background:#49efdb;border:1px solid #2bb6a4;border-radius:2.5px"></div>
<div class="b" style="left:1022px;top:658px;width:4px;height:31px;background:#49efdb;border:1px solid #2bb6a4;border-radius:2.5px"></div>
<div class="b" style="left:358px;top:706px;width:120px;height:24px;overflow:hidden;background:rgba(14,61,66,0.6);border:1px solid #2bb5a4;border-radius:4px;"><div class="b" style="left:1px;top:0;width:2px;height:22px;background:rgba(68,70,80,0.66)"></div><div class="b" style="left:103px;top:0;width:3px;height:22px;background:rgba(68,70,80,0.66)"></div></div><span class="t" style="left:371.25px;top:709px;font-size:13px;line-height:17px;color:#f3f4f6;transform:scaleX(1.0081);">debugging pip...</span>
<div class="b" style="left:358px;top:754px;width:6px;height:31px;background:#49efdb;border:1px solid #2bb6a4;border-radius:2.5px"></div>
<div class="b" style="left:364px;top:754px;width:3px;height:31px;background:#49efdb;border:1px solid #2bb6a4;border-radius:2.5px"></div>
<div class="b" style="left:461px;top:754px;width:5px;height:31px;background:#49efdb;border:1px solid #2bb6a4;border-radius:2.5px"></div>
<div class="b" style="left:358px;top:802px;width:20px;height:24px;overflow:hidden;background:rgba(14,61,66,0.6);border:1px solid #2bb5a4;border-radius:4px;"><div class="b" style="left:6px;top:0;width:2px;height:22px;background:rgba(68,70,80,0.66)"></div></div><span class="t" style="left:371.25px;top:805px;font-size:13px;line-height:17px;color:#f3f4f6;">r</span>
<div class="b" style="left:465px;top:803px;width:1px;height:22px;background:rgba(94,104,120,0.38)"></div>
<div class="b" style="left:468px;top:803px;width:1px;height:22px;background:rgba(94,104,120,0.38)"></div>
<div class="b" style="left:486px;top:803px;width:1px;height:22px;background:rgba(94,104,120,0.38)"></div>
<div class="b" style="left:488px;top:803px;width:1px;height:22px;background:rgba(94,104,120,0.38)"></div>
<div class="b" style="left:565px;top:803px;width:2px;height:22px;background:rgba(94,104,120,0.38)"></div>
<div class="b" style="left:571px;top:803px;width:2px;height:22px;background:rgba(94,104,120,0.38)"></div>
<div class="b" style="left:606px;top:803px;width:4px;height:22px;background:rgba(94,104,120,0.38)"></div>
<div class="b" style="left:627px;top:803px;width:1px;height:22px;background:rgba(94,104,120,0.38)"></div>
<div class="b" style="left:629px;top:803px;width:1px;height:22px;background:rgba(94,104,120,0.38)"></div>
<div class="b" style="left:1913px;top:104px;width:7px;height:683px;background:#374151;border-radius:4px"></div>
<!-- nav -->
<div class="b" style="left:0px;top:927px;width:1921px;height:65px;background:#1e293b;border-top:1px solid #374357"></div>
<svg style="left:181px;top:938px" width="24" height="24" viewBox="0 0 24 24" fill="none" stroke="#9ca3af" stroke-width="1.5" stroke-linecap="round" stroke-linejoin="round" ><path d="M18 18.72a9.094 9.094 0 0 0 3.741-.479 3 3 0 0 0-4.682-2.72m.94 3.198.001.031c0 .225-.012.447-.037.666A11.944 11.944 0 0 1 12 21c-2.17 0-4.207-.576-5.963-1.584A6.062 6.062 0 0 1 6 18.719m12 0a5.971 5.971 0 0 0-.941-3.197m0 0A5.995 5.995 0 0 0 12 12.75a5.995 5.995 0 0 0-5.058 2.772m0 0a3 3 0 0 0-4.681 2.72 8.986 8.986 0 0 0 3.74.477m.94-3.197a5.971 5.971 0 0 0-.94 3.197M15 6.75a3 3 0 1 1-6 0 3 3 0 0 1 6 0Zm6 3a2.25 2.25 0 1 1-4.5 0 2.25 2.25 0 0 1 4.5 0Zm-13.5 0a2.25 2.25 0 1 1-4.5 0 2.25 2.25 0 0 1 4.5 0Z"/></svg>
<span class="t" style="left:173.68px;top:966px;font-size:12px;line-height:16px;color:#9ca3af;transform:scaleX(1.0550);">Clients</span>
<svg style="left:565px;top:938px" width="24" height="24" viewBox="0 0 24 24" fill="none" stroke="#f3f4f6" stroke-width="1.5" stroke-linecap="round" stroke-linejoin="round" ><path d="M3.75 6A2.25 2.25 0 0 1 6 3.75h2.25A2.25 2.25 0 0 1 10.5 6v2.25a2.25 2.25 0 0 1-2.25 2.25H6a2.25 2.25 0 0 1-2.25-2.25V6ZM3.75 15.75A2.25 2.25 0 0 1 6 13.5h2.25a2.25 2.25 0 0 1 2.25 2.25V18a2.25 2.25 0 0 1-2.25 2.25H6A2.25 2.25 0 0 1 3.75 18v-2.25ZM13.5 6a2.25 2.25 0 0 1 2.25-2.25H18A2.25 2.25 0 0 1 20.25 6v2.25A2.25 2.25 0 0 1 18 10.5h-2.25a2.25 2.25 0 0 1-2.25-2.25V6ZM13.5 15.75a2.25 2.25 0 0 1 2.25-2.25H18a2.25 2.25 0 0 1 2.25 2.25V18A2.25 2.25 0 0 1 18 20.25h-2.25A2.25 2.25 0 0 1 13.5 18v-2.25Z"/></svg>
<span class="t" style="left:564.34px;top:966px;font-size:12px;line-height:16px;color:#f3f4f6;transform:scaleX(1.0550);">Plan</span>
<svg style="left:949px;top:938px" width="24" height="24" viewBox="0 0 24 24" fill="none" stroke="#9ca3af" stroke-width="1.5" stroke-linecap="round" stroke-linejoin="round" ><path d="M12 6v6h4.5m4.5 0a9 9 0 1 1-18 0 9 9 0 0 1 18 0Z"/></svg>
<span class="t" style="left:947.15px;top:966px;font-size:12px;line-height:16px;color:#9ca3af;transform:scaleX(1.0550);">Time</span>
<svg style="left:1333px;top:938px" width="24" height="24" viewBox="0 0 24 24" fill="none" stroke="#9ca3af" stroke-width="1.5" stroke-linecap="round" stroke-linejoin="round" ><path d="M19.5 14.25v-2.625a3.375 3.375 0 0 0-3.375-3.375h-1.5A1.125 1.125 0 0 1 13.5 7.125v-1.5a3.375 3.375 0 0 0-3.375-3.375H8.25m2.25 0H5.625c-.621 0-1.125.504-1.125 1.125v17.25c0 .621.504 1.125 1.125 1.125h12.75c.621 0 1.125-.504 1.125-1.125V11.25a9 9 0 0 0-9-9Z"/></svg>
<span class="t" style="left:1321.79px;top:966px;font-size:12px;line-height:16px;color:#9ca3af;transform:scaleX(1.0550);">Invoices</span>
<svg style="left:1717px;top:938px" width="24" height="24" viewBox="0 0 24 24" fill="none" stroke="#9ca3af" stroke-width="1.5" stroke-linecap="round" stroke-linejoin="round" ><path d="M9.594 3.94c.09-.542.56-.94 1.11-.94h2.593c.55 0 1.02.398 1.11.94l.213 1.281c.063.374.313.686.645.87.074.04.147.083.22.127.325.196.72.257 1.075.124l1.217-.456a1.125 1.125 0 0 1 1.37.49l1.296 2.247a1.125 1.125 0 0 1-.26 1.431l-1.003.827c-.293.241-.438.613-.43.992a7.723 7.723 0 0 1 0 .255c-.008.378.137.75.43.991l1.004.827c.424.35.534.955.26 1.43l-1.298 2.247a1.125 1.125 0 0 1-1.369.491l-1.217-.456c-.355-.133-.75-.072-1.076.124a6.47 6.47 0 0 1-.22.128c-.331.183-.581.495-.644.869l-.213 1.281c-.09.543-.56.94-1.11.94h-2.594c-.55 0-1.019-.398-1.11-.94l-.213-1.281c-.062-.374-.312-.686-.644-.87a6.52 6.52 0 0 1-.22-.127c-.325-.196-.72-.257-1.076-.124l-1.217.456a1.125 1.125 0 0 1-1.369-.49l-1.297-2.247a1.125 1.125 0 0 1 .26-1.431l1.004-.827c.292-.24.437-.613.43-.991a6.932 6.932 0 0 1 0-.255c.007-.38-.138-.751-.43-.992l-1.004-.827a1.125 1.125 0 0 1-.26-1.43l1.297-2.247a1.125 1.125 0 0 1 1.37-.491l1.216.456c.356.133.751.072 1.076-.124.072-.044.146-.086.22-.128.332-.183.582-.495.644-.869l.214-1.28Z M15 12a3 3 0 1 1-6 0 3 3 0 0 1 6 0Z"/></svg>
<span class="t" style="left:1706.12px;top:966px;font-size:12px;line-height:16px;color:#9ca3af;transform:scaleX(1.0550);">Settings</span>
</div></div></body></html>
